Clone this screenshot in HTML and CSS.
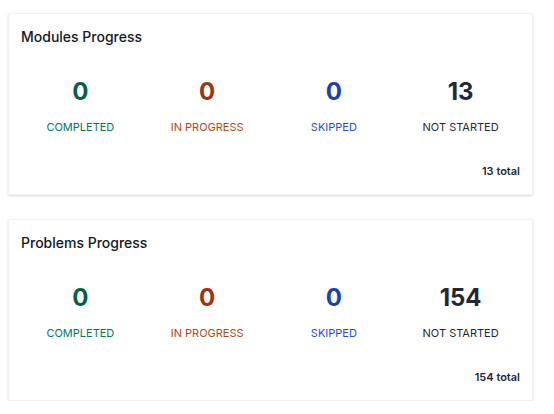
FILE: index.html
```html
<!DOCTYPE html>
<html>
<head>
<meta charset="utf-8">
<link rel="stylesheet" href="styles.css">
</head>
<body>
<div class="page">
  <section class="card">
    <h2 class="card-title">Modules Progress</h2>
    <div class="stats">
      <div class="stat green"><div class="num">0</div><div class="label">COMPLETED</div></div>
      <div class="stat orange"><div class="num">0</div><div class="label">IN PROGRESS</div></div>
      <div class="stat blue"><div class="num">0</div><div class="label">SKIPPED</div></div>
      <div class="stat dark"><div class="num">13</div><div class="label">NOT STARTED</div></div>
    </div>
    <div class="total">13 total</div>
  </section>
  <section class="card">
    <h2 class="card-title">Problems Progress</h2>
    <div class="stats">
      <div class="stat green"><div class="num">0</div><div class="label">COMPLETED</div></div>
      <div class="stat orange"><div class="num">0</div><div class="label">IN PROGRESS</div></div>
      <div class="stat blue"><div class="num">0</div><div class="label">SKIPPED</div></div>
      <div class="stat dark"><div class="num">154</div><div class="label">NOT STARTED</div></div>
    </div>
    <div class="total">154 total</div>
  </section>
</div>
</body>
</html>
```
FILE: styles.css
```css
* { box-sizing: border-box; }
html, body { margin: 0; padding: 0; background: #ffffff; }
body {
  font-family: Inter, "Noto Sans", sans-serif;
  color: #111827;
}
.page {
  width: 525px;
  margin-left: 8px;
  padding-top: 13px;
  display: flex;
  flex-direction: column;
  gap: 24px;
}
.card {
  background: #fff;
  border: 1px solid #f1f2f4;
  border-radius: 2px;
  box-shadow: 0 1px 3px rgba(0,0,0,0.10), 0 1px 2px rgba(0,0,0,0.04);
  padding: 12px 12px 15px 12px;
}
.card-title {
  margin: 0;
  font-size: 14px;
  line-height: 22px;
  font-weight: 500;
  color: #111827;
}
.stats {
  margin-top: 28px;
  display: grid;
  grid-template-columns: repeat(4, 1fr);
  gap: 8px;
  text-align: center;
}
.num {
  font-size: 24px;
  line-height: 32px;
  font-weight: 700;
}
.label {
  margin-top: 11px;
  font-size: 11px;
  line-height: 16px;
  font-weight: 400;
}
.green .num { color: #065f46; }
.green .label { color: #047857; }
.orange .num { color: #9a3412; }
.orange .label { color: #b4470f; }
.blue .num { color: #1e40af; }
.blue .label { color: #1d4ed8; }
.dark .num { color: #1f2937; }
.dark .label { color: #1f2937; }
.total {
  margin-top: 28px;
  text-align: right;
  font-size: 11px;
  line-height: 16px;
  font-weight: 600;
  color: #1f2937;
}
```
